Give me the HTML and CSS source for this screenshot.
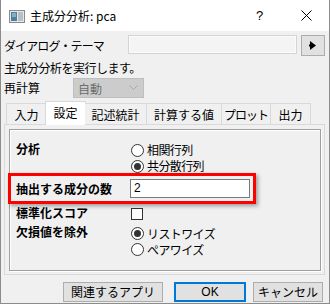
FILE: index.html
```html
<!DOCTYPE html>
<html>
<head>
	<meta charset="UTF-8">
	<title>主成分分析: pca</title>
	<link rel="stylesheet" href="styles.css">
</head>
<body>
	<div class="window">
		<div class="titlebar">
			<svg class="appicon" width="16" height="13" viewBox="0 0 16 13">
				<rect x="0.5" y="0.5" width="15" height="12" fill="#e8e8e8" stroke="#8a8a8a"/>
				<rect x="2" y="2" width="6" height="9" fill="#4f7f9c"/>
				<rect x="3" y="3" width="4" height="4" fill="#7fb0c8"/>
				<rect x="9" y="2" width="5" height="9" fill="#b8c0c4"/>
			</svg>
			<span class="title">主成分分析: pca</span>
			<span class="help">?</span>
			<svg class="close" width="11" height="11" viewBox="0 0 11 11">
				<path d="M0.5 0.5 L10.5 10.5 M10.5 0.5 L0.5 10.5" stroke="#000" stroke-width="1"/>
			</svg>
		</div>
		<div class="content">
			<div class="row theme">
				<span class="lbl">ダイアログ・テーマ</span>
				<div class="theme-box"></div>
				<button class="arrow-btn">
					<svg width="8" height="9" viewBox="0 0 8 9"><path d="M1 0 L7 4.5 L1 9 Z" fill="#000"/><rect x="0" y="3.5" width="2" height="2" fill="#000"/></svg>
				</button>
			</div>
			<div class="row desc">主成分分析を実行します。</div>
			<div class="row recalc">
				<span class="lbl-short">再計算</span>
				<div class="select">
					<span>自動</span>
					<svg width="9" height="6" viewBox="0 0 9 6"><path d="M0.5 0.5 L4.5 4.5 L8.5 0.5" fill="none" stroke="#a8a8a8"/></svg>
				</div>
			</div>
			<div class="tabs">
				<div class="tab">入力</div>
				<div class="tab active">設定</div>
				<div class="tab">記述統計</div>
				<div class="tab">計算する値</div>
				<div class="tab">プロット</div>
				<div class="tab">出力</div>
			</div>
			<div class="panel">
				<div class="inner">
					<div class="opt analysis">
						<div class="opt-lbl">分析</div>
						<div class="choices">
							<label class="radio"><span class="dot"></span>相関行列</label>
							<label class="radio"><span class="dot on"></span>共分散行列</label>
						</div>
					</div>
					<div class="opt highlight">
						<div class="opt-lbl">抽出する成分の数</div>
						<div class="num">2</div>
					</div>
					<div class="opt stdscore">
						<div class="opt-lbl">標準化スコア</div>
						<span class="check"></span>
					</div>
					<div class="opt missing">
						<div class="opt-lbl">欠損値を除外</div>
						<div class="choices">
							<label class="radio"><span class="dot on"></span>リストワイズ</label>
							<label class="radio"><span class="dot"></span>ペアワイズ</label>
						</div>
					</div>
				</div>
			</div>
			<div class="buttons">
				<button class="btn apps">関連するアプリ</button>
				<button class="btn ok">OK</button>
				<button class="btn cancel">キャンセル</button>
			</div>
		</div>
	</div>
</body>
</html>
```

FILE: styles.css
```css
* {
	box-sizing: border-box;
}
body {
	margin: 0;
	font-family: "Noto Sans CJK JP", "Noto Sans", sans-serif;
	font-size: 12px;
	color: #000;
	background: #fff;
}
.window {
	width: 330px;
	height: 304px;
	border: 1px solid #8c8c8c;
	border-top: none;
	background: #f0f0f0;
}
.titlebar {
	height: 31px;
	background: #fff;
	display: flex;
	align-items: center;
	padding-left: 8px;
}
.appicon {
	margin-top: 1px;
}
.title {
	margin-left: 5px;
	font-size: 12px;
}
.help {
	margin-left: auto;
	font-family: "Liberation Sans", sans-serif;
	font-size: 13px;
	width: 12px;
}
.close {
	margin-left: 33px;
	margin-right: 17px;
}
.content {
	padding: 0 4px 0 3px;
}
.row {
	display: flex;
	align-items: center;
}
.theme {
	margin-top: 4px;
	height: 21px;
}
.lbl {
	width: 124px;
	white-space: nowrap;
	letter-spacing: -0.9px;
}
.theme-box {
	flex: 1;
	height: 19px;
	align-self: flex-start;
	border: 1px solid #d4d4d4;
	background: #f4f4f4;
	box-shadow: inset 0 0 0 1px #fbfbfb;
}
.arrow-btn {
	width: 24px;
	height: 21px;
	margin-left: 4px;
	padding: 0;
	border: 1px solid #adadad;
	background: #e1e1e1;
	display: flex;
	align-items: center;
	justify-content: center;
}
.desc {
	margin-top: 2px;
	height: 18px;
	letter-spacing: -0.5px;
}
.recalc {
	margin-top: 2px;
	height: 20px;
}
.lbl-short {
	width: 69px;
	margin-top: -2px;
}
.select {
	width: 71px;
	height: 20px;
	background: #cccccc;
	border: 1px solid #bfbfbf;
	color: #6d6d6d;
	display: flex;
	align-items: center;
	justify-content: space-between;
	padding: 0 5px 0 4px;
}
.tabs {
	margin-top: 3px;
	height: 23px;
	display: flex;
	align-items: flex-end;
	padding-left: 2px;
	position: relative;
	z-index: 1;
}
.tab {
	height: 21px;
	border: 1px solid #d9d9d9;
	border-bottom: none;
	border-left: none;
	background: #f0f0f0;
	display: flex;
	align-items: center;
	justify-content: center;
	font-size: 12px;
	white-space: nowrap;
}
.tab:first-child {
	border-left: 1px solid #d9d9d9;
}
.tab:nth-child(1) { width: 41px; }
.tab:nth-child(2) { width: 40px; }
.tab:nth-child(3) { width: 62px; }
.tab:nth-child(4) { width: 75px; }
.tab:nth-child(5) { width: 49px; letter-spacing: -1px; }
.tab:nth-child(6) { width: 40px; }
.tab.active {
	height: 24px;
	margin: 0 -1px -1px -2px;
	width: 41px;
	background: #fff;
	border: 1px solid #d9d9d9;
	border-bottom: none;
	padding-bottom: 2px;
}
.panel {
	height: 151px;
	border: 1px solid #d9d9d9;
	padding: 4px 3px 3px 4px;
}
.inner {
	height: 142px;
	border: 1px solid #a0a0a0;
	box-shadow: 1px 1px 0 #fff, inset 1px 1px 0 #fff;
	padding-top: 12px;
}
.opt {
	display: flex;
	align-items: flex-start;
	padding-left: 6px;
}
.opt-lbl {
	width: 115px;
	font-weight: bold;
	line-height: 16px;
	white-space: nowrap;
}
.analysis .opt-lbl {
	margin-top: -1px;
}
.choices {
	display: flex;
	flex-direction: column;
}
.radio {
	display: flex;
	align-items: center;
	height: 16px;
	letter-spacing: -0.6px;
}
.analysis .radio {
	line-height: 14px;
}
.dot {
	width: 13px;
	height: 13px;
	border: 1px solid #333;
	border-radius: 50%;
	background: #fff;
	margin-right: 3px;
	display: flex;
	align-items: center;
	justify-content: center;
}
.dot.on::after {
	content: "";
	width: 7px;
	height: 7px;
	border-radius: 50%;
	background: #333;
}
.highlight {
	margin: -1px 0 0 -2px;
	width: 248px;
	height: 31px;
	border: 3px solid #ff0000;
	padding-left: 5px;
	align-items: center;
	box-shadow: 2px 2px 4px rgba(0, 0, 0, 0.35);
}
.highlight .opt-lbl {
	width: 114px;
}
.num {
	width: 120px;
	height: 19px;
	border: 1px solid #7a7a7a;
	background: #fff;
	padding-left: 3px;
	line-height: 17px;
	font-family: "Liberation Sans", sans-serif;
}
.stdscore {
	height: 16px;
	align-items: center;
	margin-top: 1px;
}
.check {
	width: 12px;
	height: 12px;
	border: 1px solid #333;
	background: #fff;
	margin-top: 2px;
}
.missing {
	margin-top: 4px;
}
.missing .opt-lbl {
	margin-top: -1px;
}
.buttons {
	margin-top: 7px;
	display: flex;
	padding-left: 59px;
}
.btn {
	height: 20px;
	border: 1px solid #adadad;
	background: #e1e1e1;
	font-family: "Noto Sans CJK JP", "Noto Sans", sans-serif;
	font-size: 12px;
	padding: 0;
	line-height: 16px;
}
.apps {
	width: 100px;
}
.ok {
	width: 72px;
	margin-left: 11px;
	border: 2px solid #0078d7;
	font-family: "Liberation Sans", sans-serif;
}
.cancel {
	width: 70px;
	margin-left: 7px;
}
```
